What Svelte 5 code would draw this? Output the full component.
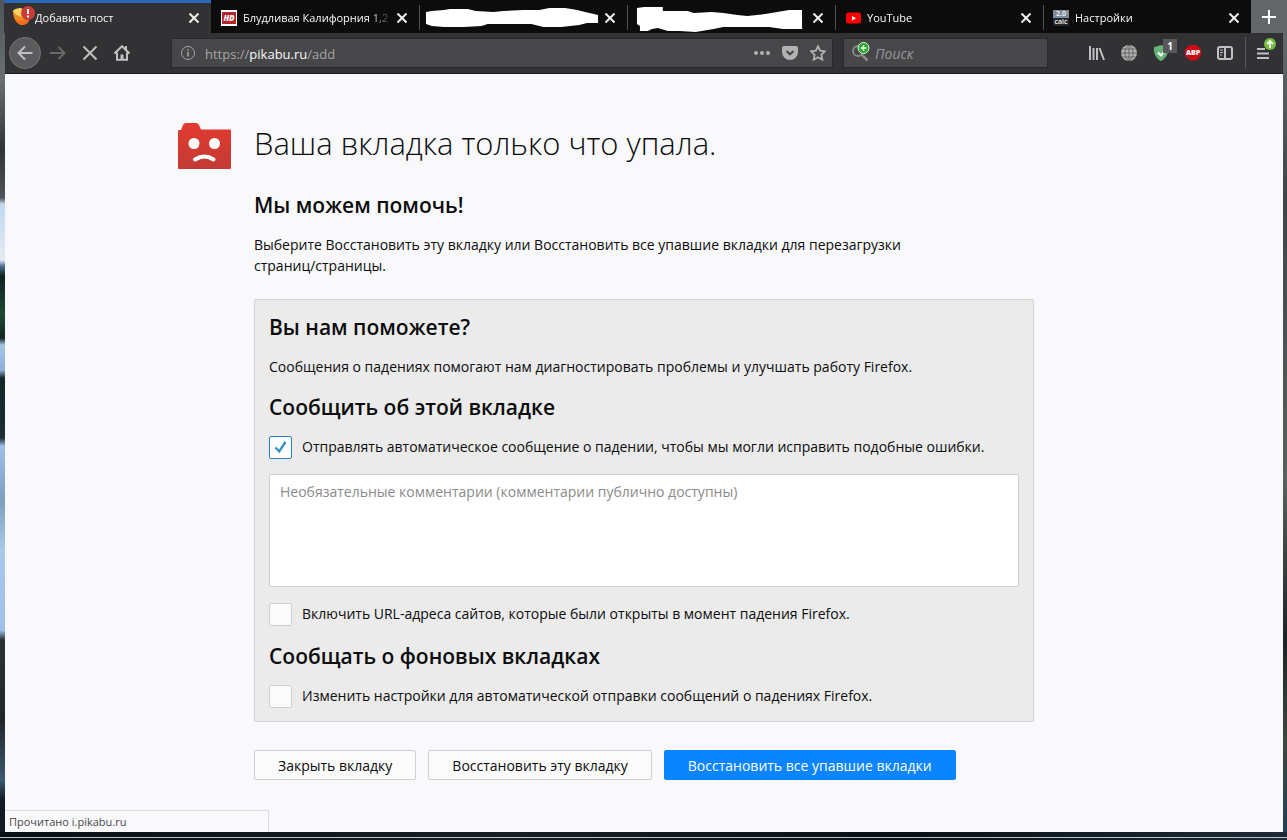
<script lang="ts">
  type Tab = {
    title: string;
    icon: 'pikabu' | 'hd' | 'youtube' | 'calc' | '';
    active?: boolean;
    mask?: string;
  };

  const tabs: Tab[] = [
    { title: 'Добавить пост', icon: 'pikabu', active: true },
    { title: 'Блудливая Калифорния 1,2', icon: 'hd' },
    {
      title: '',
      icon: '',
      mask: '6,12 12,11 24,10 30,9 48,9 56,11 74,12 84,11 104,10 120,10 130,8 146,8 158,10 166,12 179,15 179,23 168,23 160,25 142,27 124,27 112,24 94,24 68,24 62,26 44,27 24,27 12,26 6,24'
    },
    {
      title: '',
      icon: '',
      mask: '9,8 16,7 35,7 35,11 60,11 66,13 84,12 96,13 110,15 120,16 138,14 150,12 162,10 175,10 175,29 156,29 142,27 124,27 96,27 86,29 74,31 68,32 52,31 40,31 30,28 24,29 20,31 12,31 12,26 9,24'
    },
    { title: 'YouTube', icon: 'youtube' },
    { title: 'Настройки', icon: 'calc' }
  ];

  let search = $state('');
  let comments = $state('');
  let sendReport = $state(true);
  let includeUrl = $state(false);
  let autoSubmit = $state(false);
</script>

<div class="window">
  <header>
    <div class="tab-strip">
      <div class="tabs">
        {#each tabs as tab}
          <div class="tab" class:active={tab.active}>
            {#if tab.icon === 'pikabu'}
              <svg class="favicon big" viewBox="0 0 22 20" aria-hidden="true">
                <path d="M0 5l8-3 9 8c0 5-3 9-8 9-5-1-9-6-9-14z" fill="#f08a1e" />
                <path d="M0 5c1-2 5-3 8-3l7 8C11 12 3 11 0 5z" fill="#ffd264" />
                <path d="M2 13c3 3 9 3 14-2 0 5-3 8-7 8-3 0-6-3-7-6z" fill="#f26a1c" />
                <circle cx="15" cy="7" r="7" fill="#cb3c38" />
                <path d="M15 3v5M15 9.500v2" stroke="#fff" stroke-width="2" />
              </svg>
            {:else if tab.icon === 'hd'}
              <span class="favicon hd" aria-hidden="true"><i>HD</i></span>
            {:else if tab.icon === 'youtube'}
              <svg class="favicon" viewBox="0 0 16 16" aria-hidden="true">
                <rect x="1" y="2.500" width="15" height="11" rx="2.500" fill="#f00" />
                <path d="M7 6v4.500l4-2.200z" fill="#fff" />
              </svg>
            {:else if tab.icon === 'calc'}
              <span class="favicon calc" aria-hidden="true">2.0 calc</span>
            {/if}
            {#if tab.mask}
              <svg class="mask" viewBox="0 0 182 33" aria-hidden="true">
                <polygon points={tab.mask} fill="#fff" />
              </svg>
            {:else}
              <span class="tab-title">{tab.title}</span>
            {/if}
            <button class="tab-close" type="button" aria-label="Закрыть">
              <svg viewBox="0 0 12 12" aria-hidden="true">
                <path d="M1.500 1.500l9 9M10.500 1.500l-9 9" />
              </svg>
            </button>
          </div>
        {/each}
      </div>
      <button class="new-tab" type="button" aria-label="Новая вкладка">
        <svg viewBox="0 0 14 14" aria-hidden="true"><path d="M7 0v14M0 7h14" /></svg>
      </button>
    </div>

    <nav class="toolbar">
      <button class="tool back" type="button" aria-label="Назад">
        <svg viewBox="0 0 16 16" aria-hidden="true"><path d="M15.500 8H1.500M8 1.500L1.500 8 8 14.500" /></svg>
      </button>
      <button class="tool" type="button" aria-label="Вперёд" disabled>
        <svg viewBox="0 0 16 16" aria-hidden="true"><path d="M0 8h14.500M8.500 2l6 6-6 6" /></svg>
      </button>
      <button class="tool" type="button" aria-label="Остановить">
        <svg viewBox="0 0 16 16" aria-hidden="true"><path d="M1.500 1.500l13 13M14.500 1.500l-13 13" /></svg>
      </button>
      <button class="tool" type="button" aria-label="Домой">
        <svg viewBox="0 0 16 16" aria-hidden="true">
          <path d="M.5 8.500L8 1.200l7.500 7.300M3 7.500v7.300h10V7.500" />
          <path d="M12 1v4" />
          <path d="M8 9.500v5" stroke-width="3" />
        </svg>
      </button>

      <div class="url-bar">
        <svg class="info" viewBox="0 0 16 16" aria-hidden="true">
          <circle cx="8" cy="8" r="6.500" />
          <path d="M8 7v4.500M8 4.200v1.600" stroke-width="1.600" />
        </svg>
        <a class="url" href="#add">https://<b>pikabu.ru</b>/add</a>
        <button class="glyph" type="button" aria-label="Действия">
          <svg viewBox="0 0 16 16" aria-hidden="true">
            <g class="fill"><circle cx="2" cy="8" r="2" /><circle cx="8" cy="8" r="2" /><circle cx="14" cy="8" r="2" /></g>
          </svg>
        </button>
        <button class="glyph" type="button" aria-label="Pocket">
          <svg viewBox="0 0 16 16" aria-hidden="true">
            <path class="fill" d="M2 1h12q2 0 2 2v4a8 8 0 0 1-16 0V3q0-2 2-2z" />
            <path d="M4.500 6L8 9.300 11.500 6" stroke="#474749" />
          </svg>
        </button>
        <button class="glyph" type="button" aria-label="Добавить в закладки">
          <svg viewBox="0 0 16 16" aria-hidden="true">
            <path d="M8 1.200l2.100 4.500 4.900.6-3.600 3.400.9 5L8 12.300l-4.300 2.400.9-5L1 6.300l4.900-.6z" stroke-width="1.800" />
          </svg>
        </button>
      </div>

      <div class="search-bar">
        <svg viewBox="0 0 20 20" aria-hidden="true">
          <circle cx="7" cy="9" r="5" fill="none" stroke="#89898b" stroke-width="2" />
          <path d="M10.500 12.500l6 6" stroke="#89898b" stroke-width="2.500" />
          <circle cx="12.500" cy="6" r="5.500" fill="#1fad1f" stroke="#e8f5e8" stroke-width="1" />
          <path d="M12.500 3v6M9.500 6h6" stroke="#fff" stroke-width="1.600" />
        </svg>
        <input type="text" aria-label="Поиск" placeholder="Поиск" bind:value={search} />
      </div>

      <div class="extensions">
        <button class="tool" type="button" aria-label="Библиотека">
          <svg viewBox="0 0 16 16" aria-hidden="true"><path d="M1 1v14M4.500 3v12M8 3v12M10.500 3l4.500 12" /></svg>
        </button>
        <button class="tool" type="button" aria-label="Сеть">
          <svg viewBox="0 0 16 16" aria-hidden="true">
            <circle class="fill" cx="8" cy="8" r="8" />
            <path d="M0 8h16M8 0v16M1.500 4h13M1.500 12h13M8 0C2.500 4 2.500 12 8 16M8 0c5.500 4 5.500 12 0 16" stroke="#555558" stroke-width=".8" />
          </svg>
        </button>
        <button class="tool" type="button" aria-label="Защита: 1">
          <svg viewBox="0 0 16 16" aria-hidden="true">
            <path d="M8 0l7 2.200c.5 6-1.500 11-7 13.800C2.500 13.200.5 8.200 1 2.200z" fill="#67b279" stroke="none" />
            <path d="M5 7.500l3 3 4-5" stroke="#fff" />
          </svg>
          <span class="badge">1</span>
        </button>
        <button class="tool" type="button" aria-label="Adblock Plus">
          <span class="abp">ABP</span>
        </button>
        <button class="tool" type="button" aria-label="Боковая панель">
          <svg viewBox="0 0 16 16" aria-hidden="true">
            <rect x="1" y="2" width="14" height="12" rx="2" />
            <path d="M8 2v12" />
            <path d="M3 5h3M3 7.500h3M3 10h2" stroke-width="1" />
          </svg>
        </button>
      </div>

      <button class="tool menu" type="button" aria-label="Меню">
        <svg viewBox="0 0 16 16" aria-hidden="true"><path d="M1 4h8M1 8.500h12M1 13h12" /></svg>
        <svg class="update" viewBox="0 0 12 12" aria-hidden="true">
          <circle cx="6" cy="6" r="6" fill="#74bf43" stroke="none" />
          <path d="M6 10V3M3 6l3-3 3 3" stroke="#fff" stroke-width="1.600" />
        </svg>
      </button>
    </nav>
  </header>

  <main>
    <div class="crash">
      <svg class="sad-tab" viewBox="0 0 53 46" aria-hidden="true">
        <defs>
          <linearGradient id="folder" x1="0" y1="0" x2="0" y2="1">
            <stop offset="0" stop-color="#e33b2e" />
            <stop offset="1" stop-color="#c23a35" />
          </linearGradient>
        </defs>
        <path d="M1 7h2l2-5q1-2 3-2h10q2 0 3 2l2 4.500h29q1 0 1 1V45q0 1-1 1H1q-1 0-1-1V8q0-1 1-1z" fill="url(#folder)" />
        <circle cx="16" cy="20.500" r="5.500" fill="#fff" />
        <circle cx="36.500" cy="20.500" r="5.500" fill="#fff" />
        <path d="M17 36.500q9.500-6 18.500 0" fill="none" stroke="#fff" stroke-width="4" stroke-linecap="round" />
      </svg>

      <h1>Ваша вкладка только что упала.</h1>

      <div class="details">
        <h2>Мы можем помочь!</h2>
        <p class="intro">
          Выберите Восстановить эту вкладку или Восстановить все упавшие вкладки для перезагрузки
          страниц/страницы.
        </p>

        <section class="report">
          <h2>Вы нам поможете?</h2>
          <p>Сообщения о падениях помогают нам диагностировать проблемы и улучшать работу Firefox.</p>

          <h2>Сообщить об этой вкладке</h2>
          <label>
            <input type="checkbox" bind:checked={sendReport} />
            <span>Отправлять автоматическое сообщение о падении, чтобы мы могли исправить подобные ошибки.</span>
          </label>
          <textarea
            aria-label="Комментарии"
            placeholder="Необязательные комментарии (комментарии публично доступны)"
            bind:value={comments}
          ></textarea>
          <label>
            <input type="checkbox" bind:checked={includeUrl} />
            <span>Включить URL-адреса сайтов, которые были открыты в момент падения Firefox.</span>
          </label>

          <h2>Сообщать о фоновых вкладках</h2>
          <label>
            <input type="checkbox" bind:checked={autoSubmit} />
            <span>Изменить настройки для автоматической отправки сообщений о падениях Firefox.</span>
          </label>
        </section>

        <div class="actions">
          <button type="button">Закрыть вкладку</button>
          <button type="button">Восстановить эту вкладку</button>
          <button class="primary" type="button">Восстановить все упавшие вкладки</button>
        </div>
      </div>
    </div>
    <div class="status">Прочитано i.pikabu.ru</div>
  </main>
</div>

<style>
  :global(body) {
    margin: 0;
    background: #0a0d11;
  }

  .window,
  .window :global(*) {
    box-sizing: border-box;
  }

  .window {
    display: flex;
    flex-direction: column;
    min-height: 100vh;
    padding: 0 4px 8px 5px;
    font-family: 'Open Sans', 'Noto Sans', sans-serif;
    background:
      linear-gradient(#b9c4ce, #b9c4ce) 0 calc(100% - 2px) / 100% 1px no-repeat,
      linear-gradient(90deg, #0b1015, #161d23 40%, #0b1015 70%, #1d2a34) 0 100% / 100% 8px no-repeat,
      linear-gradient(#6b7072, #3d4548 200px, #59615d 480px, #1c2525 640px, #3d483f 740px, #213f55) 100% 0 / 4px 100% no-repeat,
      linear-gradient(
        #4f5559,
        #6a6e72 80px,
        #303438 150px,
        #50545a 198px,
        #c3d8f0 204px,
        #e4ebf4 260px,
        #527093 266px,
        #10201f 276px,
        #1d4a34 315px,
        #122622 338px,
        #a6c5e8 345px,
        #8fb0d8 370px,
        #152426 378px,
        #1c2f35 438px,
        #9dc0e8 446px,
        #7f9dc0 500px,
        #a8c8ec 550px,
        #9fc1e8 630px,
        #2b3134 640px,
        #20282b 720px,
        #3e5970 780px,
        #101a22 800px
      );
  }

  button {
    padding: 0;
    border: 0;
    background: none;
    font-family: inherit;
  }

  header svg {
    display: block;
    fill: none;
    stroke-width: 2;
  }

  .fill {
    fill: #b1b1b3;
    stroke: none;
  }

  /* tabs */
  .tab-strip {
    display: flex;
    height: 33px;
    margin: 0 -4px 0 -1px;
    background: #0c0c0d;
  }

  .tabs {
    display: flex;
    flex: 1;
    min-width: 0;
  }

  .tab {
    flex: 1;
    display: flex;
    align-items: center;
    min-width: 0;
    height: 33px;
    padding: 2px 11px 0 9px;
    color: #f9f9fa;
    font-size: 11px;
    border-left: 1px solid transparent;
    border-image: linear-gradient(transparent 6px, #505052 6px, #505052 29px, transparent 29px) 1;
    border-width: 0 0 0 1px;
  }

  .tab.active {
    background: #323234;
    border: 0;
    border-top: 3px solid #2a69b5;
    padding-top: 0;
  }

  .tab.active + .tab {
    border-image: none;
  }

  .favicon {
    flex: none;
    width: 16px;
    height: 16px;
    margin-right: 6px;
  }

  .favicon.big {
    width: 22px;
    height: 20px;
    margin-right: 0;
    margin-bottom: 4px;
  }

  .hd {
    display: grid;
    place-items: center;
    border: 1px solid #fff;
    border-width: 2px 1px;
    background: #b5252b;
    font-size: 8px;
    font-weight: 800;
    line-height: 12px;
  }

  .calc {
    background: linear-gradient(#7e8b99 8px, #22262b 8px);
    font-size: 7px;
    font-weight: 600;
    line-height: 8px;
    text-align: center;
  }

  .tab-title {
    flex: 1;
    min-width: 0;
    overflow: hidden;
    white-space: nowrap;
    line-height: 18px;
    mask-image: linear-gradient(90deg, #000 calc(100% - 24px), transparent);
  }

  .mask {
    flex: 1;
    min-width: 0;
    height: 33px;
    margin: -2px 0 0 -9px;
  }

  .tab-close {
    flex: none;
    margin-left: 3px;
  }

  .tab-close svg {
    width: 12px;
    height: 12px;
    stroke: #f0f0f1;
  }

  .new-tab {
    display: grid;
    place-items: center;
    width: 36px;
    background: #626668;
  }

  .new-tab svg {
    width: 14px;
    height: 14px;
    stroke: #fff;
  }

  /* toolbar */
  .toolbar {
    display: flex;
    align-items: center;
    height: 41px;
    padding: 0 2px 1px 4px;
    background: #323234;
    border-bottom: 1px solid #1b1b1d;
  }

  .tool {
    flex: none;
    position: relative;
    display: grid;
    place-items: center;
    width: 32px;
    height: 32px;
  }

  .tool svg {
    width: 16px;
    height: 16px;
    stroke: #c0c0c2;
  }

  .tool:disabled svg {
    stroke: #68686a;
  }

  .back {
    margin-right: 1px;
    border: 1px solid #757577;
    border-radius: 50%;
    background: #5b5b5d;
  }

  .url-bar,
  .search-bar {
    display: flex;
    align-items: center;
    height: 30px;
    border: 1px solid #29292b;
    background: #474749;
  }

  .url-bar {
    flex: 1;
    gap: 12px;
    min-width: 0;
    margin: 0 10px 0 33px;
    padding: 0 6px 0 8px;
  }

  .url-bar .info {
    width: 16px;
    height: 16px;
    stroke: #a5a5a7;
    stroke-width: 1;
  }

  .url {
    flex: 1;
    min-width: 0;
    margin-left: -3px;
    padding-top: 2px;
    overflow: hidden;
    white-space: nowrap;
    color: #a5a5a7;
    font-size: 13px;
    text-decoration: none;
  }

  .url b {
    color: #f9f9fa;
    font-weight: 400;
  }

  .glyph svg {
    width: 16px;
    height: 16px;
    stroke: #b1b1b3;
  }

  .search-bar {
    width: 205px;
    padding-left: 7px;
    gap: 4px;
  }

  .search-bar svg {
    flex: none;
    width: 20px;
    height: 20px;
    margin-bottom: 2px;
  }

  .search-bar input {
    flex: 1;
    min-width: 0;
    padding: 2px 0 0;
    border: 0;
    outline: 0;
    background: none;
    color: #f9f9fa;
    font: italic 14px 'Open Sans', 'Noto Sans', sans-serif;
  }

  .search-bar input::placeholder {
    color: #98989a;
    opacity: 1;
  }

  .extensions {
    display: flex;
    margin: 0 4px 0 33px;
  }

  .badge {
    position: absolute;
    top: 2px;
    right: 0;
    width: 14px;
    height: 14px;
    background: #58585a;
    color: #fff;
    font-size: 10px;
    font-weight: 700;
    line-height: 14px;
  }

  .abp {
    display: block;
    width: 16px;
    height: 16px;
    background: #c70d15;
    clip-path: polygon(30% 0, 70% 0, 100% 30%, 100% 70%, 70% 100%, 30% 100%, 0 70%, 0 30%);
    color: #fff;
    font-size: 7px;
    font-weight: 800;
    line-height: 16px;
    text-align: center;
  }

  .menu {
    width: 36px;
    border-left: 1px solid #58585a;
  }

  .menu .update {
    position: absolute;
    top: 1px;
    right: 5px;
    width: 12px;
    height: 12px;
  }

  /* crash page */
  main {
    flex: 1;
    position: relative;
    padding: 48px 0 51px;
    background: #f9f9fb;
    color: #0c0c0d;
  }

  .crash {
    display: grid;
    grid-template-columns: 76px minmax(0, 780px) 76px;
    justify-content: center;
  }

  .sad-tab {
    width: 53px;
    height: 46px;
    margin-top: 1px;
  }

  h1 {
    margin: 0;
    font-size: 31px;
    font-weight: 300;
    line-height: 42px;
  }

  .details {
    grid-column: 2;
    margin-top: 21px;
  }

  h2 {
    margin: 0;
    font-size: 21px;
    font-weight: 600;
    line-height: 30px;
  }

  p {
    margin: 14px 0 15px;
    font-size: 14px;
    line-height: 21px;
  }

  .intro {
    max-width: 700px;
    margin-bottom: 23px;
  }

  .report {
    padding: 12px 14px 13px;
    border: 1px solid #d2d2d6;
    border-radius: 2px;
    background: #ebebeb;
  }

  label {
    display: flex;
    align-items: center;
    gap: 10px;
    margin: 13px 0 15px;
    font-size: 14px;
    line-height: 24px;
  }

  label:last-child {
    margin-bottom: 0;
  }

  input[type='checkbox'] {
    appearance: none;
    flex: none;
    width: 23px;
    height: 23px;
    margin: 0;
    border: 1px solid #d0d0d3;
    border-radius: 2px;
    background: #fbfbfb;
  }

  input[type='checkbox']:checked {
    border-color: #2a80b9;
    background: #fff
      url("data:image/svg+xml,%3Csvg xmlns='http://www.w3.org/2000/svg' viewBox='0 0 21 21'%3E%3Cpath d='M5.500 10.500l3.700 4L15.500 5' fill='none' stroke='%23318fc4' stroke-width='2.300'/%3E%3C/svg%3E");
  }

  textarea {
    display: block;
    width: 100%;
    height: 113px;
    margin: 15px 0;
    padding: 7px 10px;
    border: 1px solid #cfcfd2;
    border-radius: 2px;
    background: #fff;
    resize: none;
    font: 14px/20px 'Open Sans', 'Noto Sans', sans-serif;
  }

  textarea::placeholder {
    color: #8b8b8b;
    opacity: 1;
  }

  .actions {
    display: flex;
    flex-wrap: wrap;
    gap: 12px;
    margin-top: 28px;
  }

  .actions button {
    height: 30px;
    padding: 0 23px;
    border: 1px solid #cfcfd3;
    border-radius: 2px;
    background: #fbfbfb;
    color: #0c0c0d;
    font-size: 14px;
  }

  .actions .primary {
    border-color: #0a84ff;
    background: #0a84ff;
    color: #fff;
  }

  .status {
    position: absolute;
    bottom: 0;
    left: 0;
    width: 264px;
    height: 22px;
    padding-left: 4px;
    border: 1px solid #dcdcdf;
    border-width: 1px 1px 0 0;
    background: #f9f9fb;
    color: #48484a;
    font-size: 11px;
    line-height: 21px;
  }
</style>
